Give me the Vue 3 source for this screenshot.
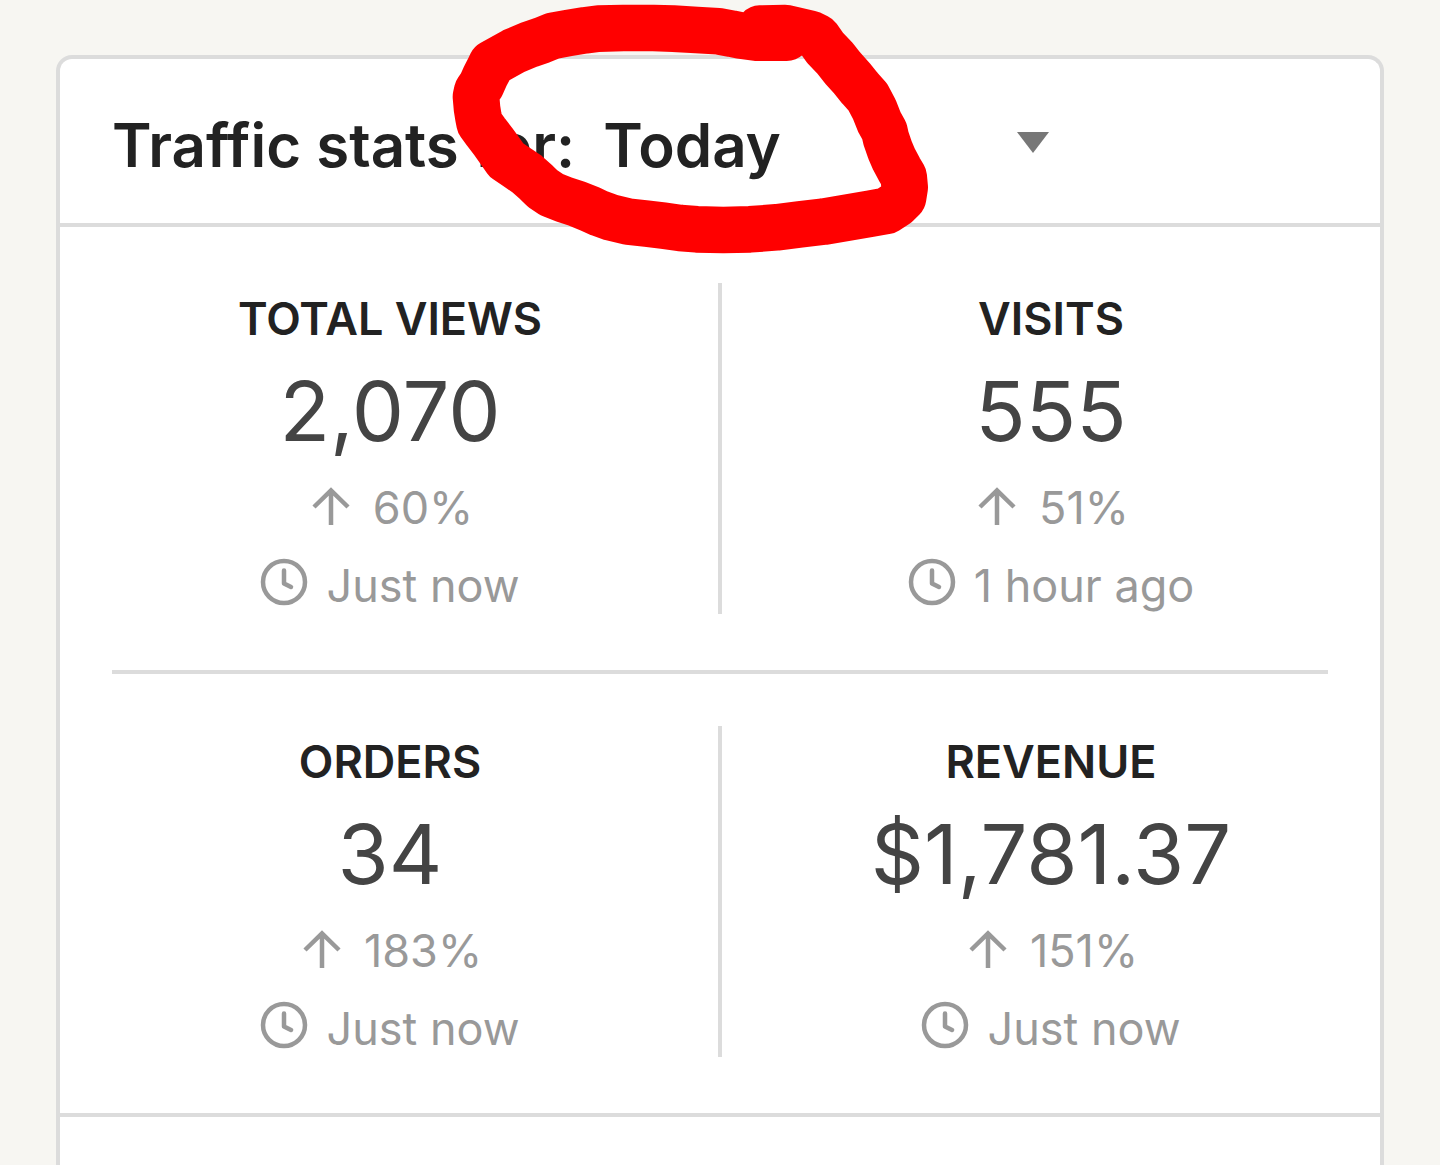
<script setup>
import { ref } from 'vue'

const period = ref('Today')
const periods = ['Today', 'Yesterday', 'This month']

const rows = [
  [
    { title: 'TOTAL VIEWS', value: '2,070', change: '60%', updated: 'Just now' },
    { title: 'VISITS', value: '555', change: '51%', updated: '1 hour ago' }
  ],
  [
    { title: 'ORDERS', value: '34', change: '183%', updated: 'Just now' },
    { title: 'REVENUE', value: '$1,781.37', change: '151%', updated: 'Just now' }
  ]
]
</script>

<template>
  <main class="page">
    <section class="card">
      <header class="head">
        <label class="label" for="period">Traffic stats for:</label>
        <div class="picker">
          <select id="period" v-model="period" class="select">
            <option v-for="p in periods" :key="p">{{ p }}</option>
          </select>
          <svg class="caret" viewBox="0 0 32 22" aria-hidden="true"><path d="M0 0H32L16 21Z" /></svg>
        </div>
      </header>

      <div class="stats">
        <template v-for="(row, i) in rows" :key="i">
          <hr v-if="i > 0" class="rule" />
          <div class="row">
            <article v-for="stat in row" :key="stat.title" class="stat">
              <h2 class="title">{{ stat.title }}</h2>
              <p class="value">{{ stat.value }}</p>
              <p class="meta">
                <svg class="icon" viewBox="0 0 48 48" aria-hidden="true">
                  <path d="M24 45V11M7 27L24 10.500L41 27" stroke-width="4.500" />
                </svg>
                <span>{{ stat.change }}</span>
              </p>
              <p class="meta">
                <svg class="icon" viewBox="0 0 48 48" aria-hidden="true">
                  <circle cx="24" cy="24" r="21" stroke-width="4.500" />
                  <path d="M24 12.500V25.500L31 29" stroke-width="4.500" stroke-linecap="round" stroke-linejoin="round" />
                </svg>
                <span>{{ stat.updated }}</span>
              </p>
            </article>
          </div>
        </template>
      </div>
    </section>

    <svg class="ring" viewBox="0 0 1500 780" aria-hidden="true">
      <path
        d="M1040 113L950 113L900 106L875 101L835 94L770 90L700 86L640 84L550 84L475 86L435 91L385 99L340 107L305 121L270 133L220 154L155 190L148 205L136 228L124 255L112 272L108 290L111 325L115 350L119 370L137 395L160 425L178 450L199 480L230 501L262 523L290 548L307 565L335 584L373 599L410 611L450 627L478 640L515 653L565 665L620 671L670 677L720 684L770 688L850 690L930 688L1010 682L1080 673L1150 665L1220 653L1290 641L1340 632L1370 613L1389 594L1394 562L1391 530L1378 508L1362 478L1350 450L1338 415L1333 393L1318 366L1303 328L1284 292L1260 265L1236 235L1208 204L1185 175L1155 143L1133 112L1110 101L1065 91L1035 84L960 86"
      />
    </svg>
  </main>
</template>

<style>
body {
  margin: 0;
  background: #f7f6f2;
}
</style>

<style scoped>
.page {
  position: relative;
  display: flex;
  flex-direction: column;
  box-sizing: border-box;
  min-height: 100vh;
  padding: 55px 56px 0;
  background: #f7f6f2;
  color: #222;
  font-family: Inter, "Liberation Sans", sans-serif;
}

.card {
  flex: 1;
  border: 4px solid #dcdcdc;
  border-bottom: 0;
  border-radius: 16px 16px 0 0;
  background: #fff;
}

.head {
  display: flex;
  align-items: center;
  gap: 28px;
  padding: 48px 52px 40px;
  border-bottom: 4px solid #dcdcdc;
  font-size: 60px;
  font-weight: 600;
  line-height: 76px;
  white-space: nowrap;
}

.picker {
  position: relative;
  width: 446px;
}

.select {
  display: block;
  width: 100%;
  height: 76px;
  margin: 0;
  padding: 0;
  border: 0;
  outline: 0;
  appearance: none;
  background: transparent;
  color: inherit;
  font: inherit;
}

.caret {
  position: absolute;
  top: 25px;
  right: 0;
  width: 32px;
  height: 22px;
  fill: #777;
  pointer-events: none;
}

.stats {
  padding-top: 4px;
  border-bottom: 4px solid #dcdcdc;
}

.row {
  display: grid;
  grid-template-columns: 1fr 1fr;
  padding: 52px 0 56px;
}

.rule {
  height: 4px;
  margin: 0 52px;
  border: 0;
  background: #dcdcdc;
}

.stat {
  text-align: center;
}

.stat + .stat {
  margin-left: -2px;
  border-left: 4px solid #dcdcdc;
}

.title {
  margin: 0;
  font-size: 45px;
  font-weight: 600;
  line-height: 72px;
}

.value {
  margin: 5px 0 18px;
  color: #444;
  font-size: 83px;
  line-height: 102px;
}

.meta {
  display: flex;
  justify-content: center;
  align-items: flex-start;
  gap: 18px;
  margin: 0;
  color: #999;
  font-size: 45px;
  line-height: 56px;
}

.meta + .meta {
  margin-top: 22px;
}

.icon {
  flex: none;
  width: 48px;
  height: 48px;
  fill: none;
  stroke: currentColor;
}

.ring {
  position: absolute;
  top: 0;
  left: 440px;
  width: 500px;
  height: 260px;
  fill: none;
  stroke: #f00;
  stroke-width: 140;
  stroke-linecap: round;
  stroke-linejoin: round;
  pointer-events: none;
}
</style>
